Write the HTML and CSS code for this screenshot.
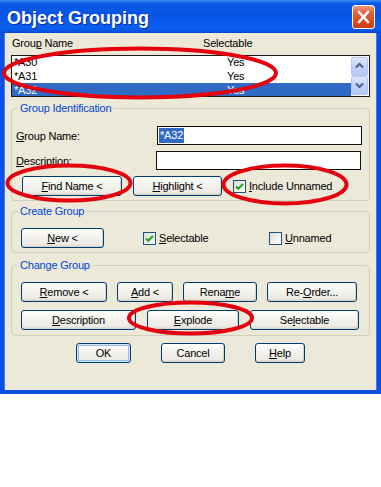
FILE: index.html
```html
<!DOCTYPE html>
<html>
<head>
    <meta charset="UTF-8">
    <title>Object Grouping</title>
    <link rel="stylesheet" href="styles.css">
</head>
<body>
<div class="window">
    <div class="titlebar">
        <span class="title">Object Grouping</span>
        <div class="close">
            <svg width="21" height="22" viewBox="0 0 21 22">
                <path d="M6 6 L15 16 M15 6 L6 16" stroke="#fff" stroke-width="2.6" stroke-linecap="round"/>
            </svg>
        </div>
    </div>

    <div class="dialog">
        <div class="list-head">
            <span class="col-name">Grou<u>p</u> Name</span>
            <span>Selectable</span>
        </div>
        <div class="list">
            <div class="rows">
                <div class="row"><span class="col-name">*A30</span><span>Yes</span></div>
                <div class="row"><span class="col-name">*A31</span><span>Yes</span></div>
                <div class="row selected"><span class="col-name">*A32</span><span>Yes</span></div>
            </div>
            <div class="scrollbar">
                <div class="sb-btn">
                    <svg width="15" height="16" viewBox="0 0 15 16"><path d="M4 9.5 L7.5 6 L11 9.5" fill="none" stroke="#4d6185" stroke-width="2"/></svg>
                </div>
                <div class="sb-btn">
                    <svg width="15" height="16" viewBox="0 0 15 16"><path d="M4 6.5 L7.5 10 L11 6.5" fill="none" stroke="#4d6185" stroke-width="2"/></svg>
                </div>
            </div>
        </div>

        <fieldset class="group group-ident">
            <legend>Group Identification</legend>
            <div class="field">
                <label><u>G</u>roup Name:</label>
                <div class="input"><span class="sel">*A32</span></div>
            </div>
            <div class="field">
                <label><u>D</u>escription:</label>
                <div class="input input-desc"></div>
            </div>
            <div class="btn-row">
                <button type="button" class="btn w-find"><u>F</u>ind Name &lt;</button>
                <button type="button" class="btn w-highlight"><u>H</u>ighlight &lt;</button>
                <div class="check">
                    <span class="box"><svg width="11" height="11" viewBox="0 0 11 11"><path d="M2 5.5 L4.3 7.8 L9 3" fill="none" stroke="#21a121" stroke-width="2"/></svg></span>
                    <span><u>I</u>nclude Unnamed</span>
                </div>
            </div>
        </fieldset>

        <fieldset class="group group-create">
            <legend>Create Group</legend>
            <div class="btn-row">
                <button type="button" class="btn w-new"><u>N</u>ew &lt;</button>
                <div class="check check-sel">
                    <span class="box"><svg width="11" height="11" viewBox="0 0 11 11"><path d="M2 5.5 L4.3 7.8 L9 3" fill="none" stroke="#21a121" stroke-width="2"/></svg></span>
                    <span><u>S</u>electable</span>
                </div>
                <div class="check">
                    <span class="box"></span>
                    <span><u>U</u>nnamed</span>
                </div>
            </div>
        </fieldset>

        <fieldset class="group group-change">
            <legend>Change Group</legend>
            <div class="btn-row gap10">
                <button type="button" class="btn w-remove"><u>R</u>emove &lt;</button>
                <button type="button" class="btn w-add"><u>A</u>dd &lt;</button>
                <button type="button" class="btn w-rename">Rena<u>m</u>e</button>
                <button type="button" class="btn w-reorder">Re-<u>O</u>rder...</button>
            </div>
            <div class="btn-row gap11 second">
                <button type="button" class="btn w-desc"><u>D</u>escription</button>
                <button type="button" class="btn w-explode"><u>E</u>xplode</button>
                <button type="button" class="btn w-selectable">Se<u>l</u>ectable</button>
            </div>
        </fieldset>

        <div class="footer">
            <button type="button" class="btn default w-ok">OK</button>
            <button type="button" class="btn w-cancel">Cancel</button>
            <button type="button" class="btn w-help"><u>H</u>elp</button>
        </div>
    </div>

    <!-- red annotation marks drawn over the dialog -->
    <svg class="marks" width="381" height="394" viewBox="0 0 381 394">
        <ellipse cx="140" cy="73" rx="136" ry="24.5" fill="none" stroke="#e4000c" stroke-width="4"/>
        <ellipse cx="69" cy="183" rx="61.5" ry="17.5" fill="none" stroke="#e4000c" stroke-width="4"/>
        <ellipse cx="285" cy="184.5" rx="61.5" ry="19" fill="none" stroke="#e4000c" stroke-width="4"/>
        <ellipse cx="190.5" cy="318" rx="61.5" ry="15.5" fill="none" stroke="#e4000c" stroke-width="4"/>
    </svg>
</div>
</body>
</html>
```

FILE: styles.css
```css
html, body {
    margin: 0;
    background-color: #ffffff;
}

body {
    font-family: "Liberation Sans", Arial, sans-serif;
    font-size: 11px;
    letter-spacing: -0.2px;
    color: #000000;
}

.window {
    position: relative;
    width: 381px;
}

.titlebar {
    height: 33px;
    display: flex;
    align-items: center;
    justify-content: space-between;
    padding: 0 6px 0 7px;
    background: linear-gradient(180deg, #3d8cf5 0%, #0a5ae6 10%, #0654e4 45%, #0a5ff0 85%, #0752e2 95%, #0444cf 100%);
}

.title {
    color: #ffffff;
    font-size: 18px;
    font-weight: bold;
    letter-spacing: 0;
    text-shadow: 1px 1px #0a2a9a;
    padding-top: 3px;
}

.close {
    width: 21px;
    height: 22px;
    border: 1px solid #ffffff;
    border-radius: 3px;
    background: linear-gradient(180deg, #ee9c7e 0%, #e2613a 30%, #d8481f 75%, #c93d15 100%);
    margin-top: 1px;
}

.close svg {
    display: block;
}

.dialog {
    height: 357px;
    padding: 0 7px;
    background-color: #ece9d8;
    border: 4px solid #0b4fe3;
    border-top: none;
    box-shadow: inset 1px 0 #3c7ef4, inset -1px 0 #3c7ef4;
}

/* list */

.list-head {
    display: flex;
    padding: 4px 0 0 1px;
    line-height: 13px;
}

.list-head .col-name {
    width: 191px;
}

.list {
    display: flex;
    height: 40px;
    margin-top: 5px;
    border: 1px solid #1a1a1a;
    background-color: #ffffff;
    overflow: hidden;
}

.rows {
    flex: 1;
    margin-top: -1px;
}

.row {
    display: flex;
    height: 14px;
    line-height: 14px;
    padding-left: 2px;
}

.row .col-name {
    width: 213px;
}

.row.selected {
    background-color: #316ac5;
    color: #ffffff;
}

.scrollbar {
    width: 17px;
    display: flex;
    flex-direction: column;
    justify-content: space-between;
    padding: 1px 1px 1px 0;
    background-color: #f7f6f1;
}

.sb-btn {
    height: 17px;
    border: 1px solid #b7c8f0;
    border-radius: 2px;
    background: linear-gradient(180deg, #dbe5fd 0%, #c4d3fb 50%, #b5c8f7 100%);
}

.sb-btn svg {
    display: block;
}

/* group boxes */

.group {
    margin: 5px 0 0;
    padding: 0 7px 4px 4px;
    border: 1px solid #d0d0bf;
    border-radius: 4px;
    min-width: 0;
}

.group legend {
    padding: 0 2px;
    margin-left: 2px;
    color: #0046d5;
    line-height: 13px;
}

.group-create {
    margin-top: 4px;
}

.group-change {
    margin-top: 6px;
    padding-bottom: 5px;
}

.field {
    display: flex;
    align-items: center;
    height: 19px;
    margin-bottom: 6px;
}

.group-ident .field:first-of-type {
    margin-top: 11px;
}

.field label {
    width: 141px;
}

.input {
    width: 202px;
    height: 17px;
    border: 1px solid #111111;
    background-color: #ffffff;
    display: flex;
    align-items: center;
    padding-left: 1px;
}

.input-desc {
    margin-left: -1px;
}

.sel {
    background-color: #316ac5;
    color: #ffffff;
    line-height: 15px;
    padding: 0 1px;
}

.btn-row {
    display: flex;
    align-items: center;
    gap: 11px;
    margin-left: 6px;
}

.group-create .btn-row,
.group-change .btn-row {
    margin-left: 5px;
    margin-top: 10px;
}

.group-change .btn-row.second {
    margin-top: 8px;
}

.gap10 {
    gap: 10px;
}

.btn {
    height: 20px;
    padding: 0;
    font-family: inherit;
    font-size: 11px;
    letter-spacing: -0.2px;
    color: #000000;
    border: 1px solid #003c74;
    border-radius: 3px;
    background: linear-gradient(180deg, #ffffff 0%, #f4f3ee 40%, #ecebe6 85%, #d6d0c5 100%);
    box-shadow: inset -1px -1px #d8d4c8;
}

.btn.default {
    box-shadow: inset 0 0 0 1px #cee7ff, inset 0 0 0 2px #98b8ea;
}

.w-find { width: 100px; }
.w-highlight { width: 89px; }
.w-new { width: 83px; }
.w-remove { width: 86px; }
.w-add { width: 56px; }
.w-rename { width: 74px; }
.w-reorder { width: 90px; }
.w-desc { width: 115px; }
.w-explode { width: 92px; }
.w-selectable { width: 109px; }
.w-ok { width: 55px; }
.w-cancel { width: 64px; }
.w-help { width: 50px; }

.check {
    display: flex;
    align-items: center;
    gap: 3px;
}

.check-sel {
    width: 115px;
    margin-left: 28px;
}

.box {
    width: 11px;
    height: 11px;
    border: 1px solid #1c5180;
    background: linear-gradient(135deg, #dcdcd7 0%, #ffffff 100%);
}

.box svg {
    display: block;
}

.footer {
    display: flex;
    gap: 30px;
    margin: 7px 0 0 65px;
}

.marks {
    position: absolute;
    top: 0;
    left: 0;
    pointer-events: none;
}
```
